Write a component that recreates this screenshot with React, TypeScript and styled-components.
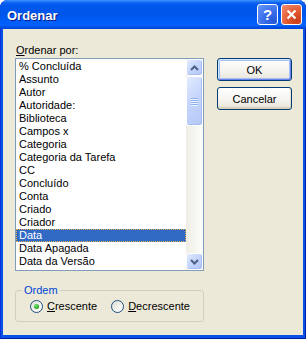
import React, { useState } from 'react'
import styled, { createGlobalStyle, css } from 'styled-components'

const UI_FONT = `'Liberation Sans', Arial, sans-serif`

const GlobalStyle = createGlobalStyle`
  body {
    margin: 0;
    background: #fff;
  }
  * {
    box-sizing: border-box;
  }
`

const Window = styled.div`
  width: 306px;
  height: 339px;
  display: flex;
  flex-direction: column;
  background: #0853E6;
  box-shadow: inset 1px 0 0 #0831D9, inset -1px 0 0 #001EA0, inset 0 -1px 0 #001EA0;
  border-radius: 8px 8px 0 0;
  overflow: hidden;
  font-family: ${UI_FONT};
  font-size: 11px;
  color: #000;
`

const TitleBar = styled.div`
  height: 29px;
  flex: none;
  display: flex;
  align-items: center;
  padding: 0 4px 0 7px;
  background: linear-gradient(
    180deg,
    #3D95FF 0px,
    #0A5FF0 3px,
    #0058EE 6px,
    #0055EA 14px,
    #005DF8 21px,
    #0062FE 25px,
    #0048DA 28px
  );
`

const Title = styled.div`
  flex: 1;
  padding-top: 1px;
  font: bold 13px ${UI_FONT};
  color: #fff;
  text-shadow: 1px 1px 0 #0A1883;
`

const CaptionButtons = styled.div`
  display: flex;
  gap: 3px;
`

const CaptionButton = styled.div<{ $kind: 'help' | 'close' }>`
  width: 21px;
  height: 21px;
  border: 1px solid #fff;
  border-radius: 3px;
  display: flex;
  align-items: center;
  justify-content: center;
  color: #fff;
  font: bold 15px ${UI_FONT};
  ${({ $kind }) =>
    $kind === 'help'
      ? css`
          background: radial-gradient(circle at 80% 85%, #2458D8 0%, #3A6FEA 45%, #6A98F8 100%);
        `
      : css`
          background: radial-gradient(circle at 80% 85%, #C8401A 0%, #E3582F 45%, #F29274 100%);
        `}
`

const Body = styled.div`
  flex: 1;
  margin: 0 3px 4px;
  background: #ECE9D8;
  display: flex;
  padding: 15px 0 0 12px;
`

const LeftColumn = styled.div`
  width: 189px;
  display: flex;
  flex-direction: column;
`

const RightColumn = styled.div`
  margin-left: 13px;
  padding-top: 14px;
  display: flex;
  flex-direction: column;
  gap: 6px;
`

const FieldLabel = styled.div`
  padding-left: 1px;
  line-height: 13px;
  height: 13px;
`

const ListBox = styled.div`
  margin-top: 1px;
  height: 213px;
  border: 1px solid #7F9DB9;
  background: #fff;
  display: flex;
`

const Items = styled.div`
  flex: 1;
  min-width: 0;
  padding-top: 1px;
  overflow: hidden;
`

const Item = styled.div<{ $selected?: boolean }>`
  height: 13px;
  line-height: 13px;
  padding-left: 3px;
  white-space: nowrap;
  ${({ $selected }) =>
    $selected &&
    css`
      background: #316AC5;
      color: #fff;
      outline: 1px dotted #E8B04A;
      outline-offset: -1px;
    `}
`

const ScrollBar = styled.div`
  width: 17px;
  flex: none;
  display: flex;
  flex-direction: column;
  background: linear-gradient(to right, #EEEDE5, #FEFEFB);
`

const scrollPart = css`
  border: 1px solid #fff;
  border-radius: 3px;
  background: linear-gradient(135deg, #E2EAFE 0%, #C6D6FC 45%, #B4C8F6 100%);
  box-shadow: inset -1px -1px 0 #A8BEF0;
`

const ScrollButton = styled.div`
  height: 17px;
  flex: none;
  display: flex;
  align-items: center;
  justify-content: center;
  ${scrollPart}
`

const Thumb = styled.div`
  height: 50px;
  flex: none;
  display: flex;
  flex-direction: column;
  align-items: center;
  justify-content: center;
  gap: 1px;
  ${scrollPart}
`

const Grip = styled.span`
  width: 7px;
  height: 1px;
  background: #8CB0F8;
  box-shadow: 0 1px 0 #EEF4FE;
`

const Track = styled.div`
  flex: 1;
`

const PushButton = styled.button<{ $default?: boolean }>`
  width: 75px;
  height: 23px;
  padding: 0;
  border: 1px solid #003C74;
  border-radius: 3px;
  background: linear-gradient(180deg, #FFFFFF 0%, #F5F4EF 55%, #E6E3D8 100%);
  font: 11px ${UI_FONT};
  color: #000;
  box-shadow: ${({ $default }) =>
    $default
      ? 'inset 1px 1px 0 #CEE7FF, inset -1px -1px 0 #6982EE, inset 0 0 0 2px #A8C1F5'
      : 'inset 0 -2px 0 #D8D2BD, inset -1px 0 0 #E2DECD'};
`

const GroupBox = styled.fieldset`
  margin: 13px 0 0;
  min-width: 0;
  padding: 3px 0 8px 14px;
  border: 1px solid #D0D0BF;
  border-radius: 3px;
`

const Legend = styled.legend`
  margin-left: -8px;
  padding: 0 2px;
  line-height: 13px;
  color: #0046D5;
`

const RadioRow = styled.div`
  display: flex;
  align-items: center;
  gap: 14px;
  height: 13px;
`

const RadioOption = styled.label`
  display: flex;
  align-items: center;
  gap: 4px;
  line-height: 13px;
`

const RadioDot = styled.span<{ $checked?: boolean }>`
  width: 13px;
  height: 13px;
  border-radius: 50%;
  border: 1px solid #1C5180;
  background: linear-gradient(135deg, #DCDCD7 0%, #F4F4F0 60%, #fff 100%);
  display: flex;
  align-items: center;
  justify-content: center;
  &::after {
    content: '';
    display: ${({ $checked }) => ($checked ? 'block' : 'none')};
    width: 5px;
    height: 5px;
    border-radius: 50%;
    background: radial-gradient(circle at 40% 35%, #7CE87A 0%, #2DB12A 55%, #1A8C18 100%);
  }
`

const fields = [
  '% Concluída',
  'Assunto',
  'Autor',
  'Autoridade:',
  'Biblioteca',
  'Campos x',
  'Categoria',
  'Categoria da Tarefa',
  'CC',
  'Concluído',
  'Conta',
  'Criado',
  'Criador',
  'Data',
  'Data Apagada',
  'Data da Versão',
]

const Arrow = ({ up }: { up?: boolean }) => (
  <svg width="9" height="6" viewBox="0 0 9 6">
    <path
      d={up ? 'M1 5 L4.5 1.5 L8 5' : 'M1 1 L4.5 4.5 L8 1'}
      fill="none"
      stroke="#4D6185"
      strokeWidth="2"
    />
  </svg>
)

const App = () => {
  const [selected, setSelected] = useState('Data')
  const [order, setOrder] = useState<'asc' | 'desc'>('asc')

  return (
    <Window>
      <GlobalStyle />
      <TitleBar>
        <Title>Ordenar</Title>
        <CaptionButtons>
          <CaptionButton $kind="help">?</CaptionButton>
          <CaptionButton $kind="close">
            <svg width="11" height="11" viewBox="0 0 11 11">
              <path d="M1.5 1.5 L9.5 9.5 M9.5 1.5 L1.5 9.5" stroke="#fff" strokeWidth="2.2" />
            </svg>
          </CaptionButton>
        </CaptionButtons>
      </TitleBar>
      <Body>
        <LeftColumn>
          <FieldLabel>
            <u>O</u>rdenar por:
          </FieldLabel>
          <ListBox>
            <Items>
              {fields.map((f) => (
                <Item key={f} $selected={f === selected} onClick={() => setSelected(f)}>
                  {f}
                </Item>
              ))}
            </Items>
            <ScrollBar>
              <ScrollButton>
                <Arrow up />
              </ScrollButton>
              <Thumb>
                <Grip />
                <Grip />
                <Grip />
                <Grip />
              </Thumb>
              <Track />
              <ScrollButton>
                <Arrow />
              </ScrollButton>
            </ScrollBar>
          </ListBox>
          <GroupBox>
            <Legend>Ordem</Legend>
            <RadioRow>
              <RadioOption onClick={() => setOrder('asc')}>
                <RadioDot $checked={order === 'asc'} />
                <span>
                  <u>C</u>rescente
                </span>
              </RadioOption>
              <RadioOption onClick={() => setOrder('desc')}>
                <RadioDot $checked={order === 'desc'} />
                <span>
                  <u>D</u>ecrescente
                </span>
              </RadioOption>
            </RadioRow>
          </GroupBox>
        </LeftColumn>
        <RightColumn>
          <PushButton $default>OK</PushButton>
          <PushButton>Cancelar</PushButton>
        </RightColumn>
      </Body>
    </Window>
  )
}

export default App
